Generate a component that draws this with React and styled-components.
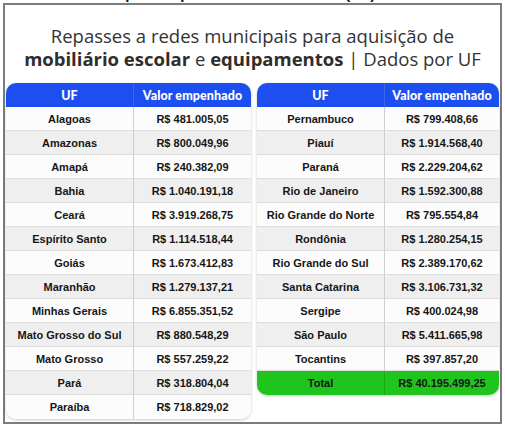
import React from "react"
import styled, { createGlobalStyle } from "styled-components"

const GlobalStyle = createGlobalStyle`
  html, body {
    margin: 0;
    padding: 0;
    background: #fff;
  }
`

const Page = styled.div`
  width: 505px;
  height: 426px;
  overflow: hidden;
  background: #fff;
`

// caption of the page above, only its descenders peek out
const CutStrip = styled.div`
  height: 3px;
  overflow: hidden;
  padding-left: 106px;
`

const CutText = styled.div`
  margin-top: -14px;
  font-family: "Liberation Sans", Arial, sans-serif;
  font-size: 15px;
  line-height: 15px;
  font-weight: 700;
  color: #111;
  white-space: nowrap;
`

const Frame = styled.div`
  box-sizing: border-box;
  width: 499px;
  height: 421px;
  margin-left: 3px;
  border: 2px solid #7c7c7c;
  background: #fff;
  padding: 19px 1px 0;
`

const Title = styled.h1`
  margin: 0;
  font-family: "Open Sans", Lato, sans-serif;
  font-size: 18.5px;
  line-height: 23px;
  font-weight: 500;
  color: #333;
  text-align: center;

  b {
    font-weight: 700;
    color: #2e2e2e;
  }
`

const Tables = styled.div`
  display: flex;
  align-items: flex-start;
  gap: 6px;
  margin-top: 13px;
`

const Table = styled.div`
  width: ${p => p.$width}px;
  border-radius: 10px;
  overflow: hidden;
  background: #fff;
  box-shadow: 0 1px 3px rgba(0, 0, 0, 0.22);
  display: grid;
  grid-template-columns: 128px 1fr;
  grid-auto-rows: 24px;
`

const HeadCell = styled.div`
  display: flex;
  align-items: center;
  justify-content: center;
  background: #1d4ff0;
  color: #fff;
  font-family: Lato, sans-serif;
  font-weight: 900;
  font-size: 12.5px;
  letter-spacing: 0.1px;
  border-right: ${p => (p.$first ? "1px solid #3d66f2" : "none")};
`

const Cell = styled.div`
  box-sizing: border-box;
  display: flex;
  align-items: center;
  justify-content: center;
  font-family: "Liberation Sans", Arial, sans-serif;
  font-weight: 700;
  font-size: 11px;
  color: #161616;
  white-space: nowrap;
  background: ${p => (p.$total ? "#1fc51c" : p.$even ? "#efefef" : "#fcfcfc")};
  border-bottom: ${p => (p.$last ? "none" : "1px solid #dcdcdc")};
  border-right: ${p =>
    p.$first ? `1px solid ${p.$total ? "#1aa817" : "#cfcfcf"}` : "none"};
`

const left = [
  ["Alagoas", "R$ 481.005,05"],
  ["Amazonas", "R$ 800.049,96"],
  ["Amapá", "R$ 240.382,09"],
  ["Bahia", "R$ 1.040.191,18"],
  ["Ceará", "R$ 3.919.268,75"],
  ["Espírito Santo", "R$ 1.114.518,44"],
  ["Goiás", "R$ 1.673.412,83"],
  ["Maranhão", "R$ 1.279.137,21"],
  ["Minhas Gerais", "R$ 6.855.351,52"],
  ["Mato Grosso do Sul", "R$ 880.548,29"],
  ["Mato Grosso", "R$ 557.259,22"],
  ["Pará", "R$ 318.804,04"],
  ["Paraíba", "R$ 718.829,02"],
]

const right = [
  ["Pernambuco", "R$ 799.408,66"],
  ["Piauí", "R$ 1.914.568,40"],
  ["Paraná", "R$ 2.229.204,62"],
  ["Rio de Janeiro", "R$ 1.592.300,88"],
  ["Rio Grande do Norte", "R$ 795.554,84"],
  ["Rondônia", "R$ 1.280.254,15"],
  ["Rio Grande do Sul", "R$ 2.389.170,62"],
  ["Santa Catarina", "R$ 3.106.731,32"],
  ["Sergipe", "R$ 400.024,98"],
  ["São Paulo", "R$ 5.411.665,98"],
  ["Tocantins", "R$ 397.857,20"],
]

const UfTable = ({ rows, width, total }) => (
  <Table $width={width}>
    <HeadCell $first>UF</HeadCell>
    <HeadCell>Valor empenhado</HeadCell>
    {rows.map(([uf, value], i) => {
      const last = !total && i === rows.length - 1
      return (
        <React.Fragment key={uf}>
          <Cell $first $even={i % 2 === 1} $last={last}>
            {uf}
          </Cell>
          <Cell $even={i % 2 === 1} $last={last}>
            {value}
          </Cell>
        </React.Fragment>
      )
    })}
    {total && (
      <>
        <Cell $first $total $last>
          Total
        </Cell>
        <Cell $total $last>
          {total}
        </Cell>
      </>
    )}
  </Table>
)

export default function App() {
  return (
    <Page>
      <GlobalStyle />
      <CutStrip aria-hidden="true">
        <CutText>Repasses por unidade federativa (UF)</CutText>
      </CutStrip>
      <Frame>
        <Title>
          Repasses a redes municipais para aquisição de
          <br />
          <b>mobiliário escolar</b> e <b>equipamentos</b> | Dados por UF
        </Title>
        <Tables>
          <UfTable rows={left} width={245} />
          <UfTable rows={right} width={242} total="R$ 40.195.499,25" />
        </Tables>
      </Frame>
    </Page>
  )
}
